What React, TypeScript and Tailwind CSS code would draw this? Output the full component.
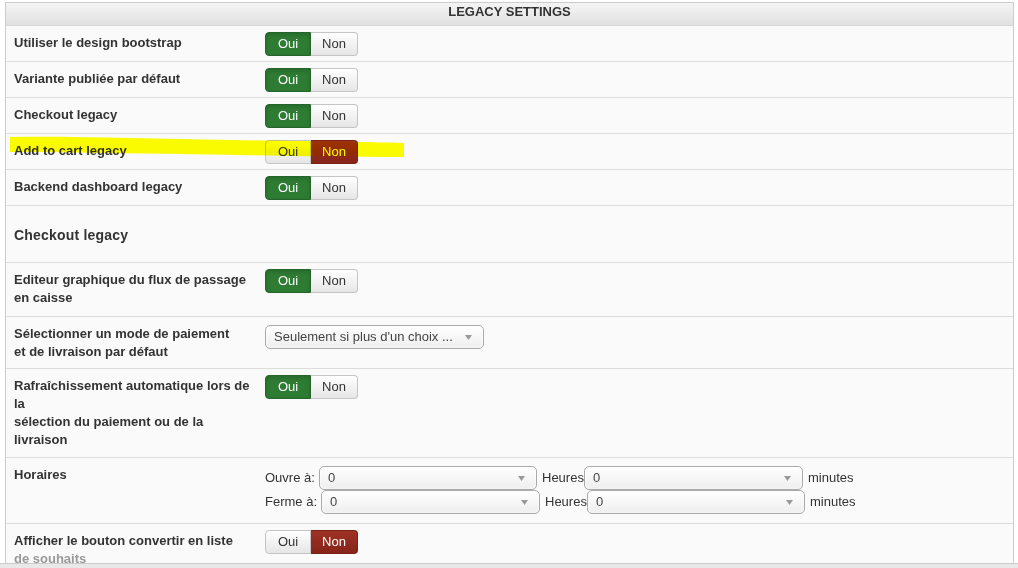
import React from 'react'

function Toggle({ on }: { on: boolean }) {
  return (
    <div className="inline-flex h-[24px] text-[13px] leading-none">
      <span
        className={
          on
            ? 'flex w-[46px] items-center justify-center rounded-l-[4px] border border-[#24652a] bg-[#2e7b33] text-white shadow-[inset_0_2px_4px_rgba(0,0,0,0.15)]'
            : 'flex w-[46px] items-center justify-center rounded-l-[4px] border border-[#c5c5c5] bg-gradient-to-b from-white to-[#e6e6e6] text-[#333]'
        }
      >
        Oui
      </span>
      <span
        className={
          on
            ? 'flex w-[47px] items-center justify-center rounded-r-[4px] border border-l-0 border-[#c5c5c5] bg-gradient-to-b from-white to-[#e6e6e6] text-[#333]'
            : 'flex w-[47px] items-center justify-center rounded-r-[4px] border border-l-0 border-[#7a2015] bg-gradient-to-b from-[#9e3224] to-[#86241a] text-white'
        }
      >
        Non
      </span>
    </div>
  )
}

function Select({ text, w }: { text: string; w: string }) {
  return (
    <div
      className={`flex h-[24px] ${w} items-center justify-between rounded-[5px] border border-[#aaa] bg-gradient-to-b from-white to-[#eeeeee] pl-[8px] pr-[11px] text-[13px] text-[#444] shadow-[inset_0_0_3px_white]`}
    >
      <span className="truncate">{text}</span>
      <svg width="7" height="5" viewBox="0 0 7 5" className="shrink-0">
        <path d="M0 0 L7 0 L3.5 5 Z" fill="#999" />
      </svg>
    </div>
  )
}

function Row({
  label,
  children,
  pt = 'pt-[5px]',
  pb = 'pb-[10px]',
  first = false,
}: {
  label: React.ReactNode
  children?: React.ReactNode
  pt?: string
  pb?: string
  first?: boolean
}) {
  return (
    <div className={first ? 'flex' : 'flex border-t border-[#ddd]'}>
      <div
        className={`w-[259px] shrink-0 ${pb} pl-[8px] pt-[8px] text-[13px] font-bold leading-[18px] text-[#333]`}
      >
        {label}
      </div>
      <div className={`flex-1 ${pt}`}>{children}</div>
    </div>
  )
}

export default function App() {
  return (
    <div className="relative flex h-[568px] w-[1018px] flex-col overflow-hidden bg-white font-['Liberation_Sans',Arial,sans-serif] text-[#333]">
      <div className="ml-[5px] mt-[2px] flex h-[561px] w-[1009px] flex-col overflow-hidden border-x border-t border-[#ccc] bg-[#fafafa]">
        {/* Header */}
        <div className="flex h-[23px] shrink-0 items-start justify-center border-b border-[#d6d6d6] bg-gradient-to-b from-[#f4f4f4] to-[#e1e1e1] pt-[1px] text-[13px] font-bold leading-[16px] text-[#333]">
          LEGACY SETTINGS
        </div>
        <div className="flex flex-col">
          <Row first pb="pb-[9px]" label="Utiliser le design bootstrap">
            <Toggle on />
          </Row>
          <Row pb="pb-[9px]" label="Variante publiée par défaut">
            <Toggle on />
          </Row>
          <Row pb="pb-[9px]" label="Checkout legacy">
            <Toggle on />
          </Row>
          <Row pb="pb-[9px]" label="Add to cart legacy">
            <Toggle on={false} />
          </Row>
          <Row pb="pb-[9px]" label="Backend dashboard legacy">
            <Toggle on />
          </Row>
          <div className="h-[57px] border-t border-[#ddd] pl-[8px] pt-[20px] text-[14px] font-bold leading-[18px] tracking-[0.2px] text-[#333]">
            Checkout legacy
          </div>
          <Row
            pb="pb-[9px]"
            label={
              <>
                Editeur graphique du flux de passage
                <br />
                en caisse
              </>
            }
          >
            <Toggle on />
          </Row>
          <Row
            pt="pt-[8px]"
            pb="pb-[7px]"
            label={
              <>
                Sélectionner un mode de paiement
                <br />
                et de livraison par défaut
              </>
            }
          >
            <Select w="w-[219px]" text="Seulement si plus d'un choix ..." />
          </Row>
          <Row
            pb="pb-[8px]"
            label={
              <>
                Rafraîchissement automatique lors de
                <br />
                la
                <br />
                sélection du paiement ou de la
                <br />
                livraison
              </>
            }
          >
            <Toggle on />
          </Row>
          <Row label="Horaires" pt="pt-[8px]">
            <div className="flex flex-col pb-[9px] text-[13px] text-[#333]">
              <div className="flex items-center">
                <span className="w-[54px]">Ouvre à:</span>
                <Select w="w-[218px]" text="0" />
                <span className="ml-[5px] w-[42px]">Heures</span>
                <Select w="w-[219px]" text="0" />
                <span className="ml-[5px]">minutes</span>
              </div>
              <div className="flex items-center">
                <span className="w-[56px]">Ferme à:</span>
                <Select w="w-[219px]" text="0" />
                <span className="ml-[5px] w-[42px]">Heures</span>
                <Select w="w-[218px]" text="0" />
                <span className="ml-[5px]">minutes</span>
              </div>
            </div>
          </Row>
          <Row
            label={
              <>
                Afficher le bouton convertir en liste
                <br />
                <span className="text-[#999]">de souhaits</span>
              </>
            }
          >
            <Toggle on={false} />
          </Row>
        </div>
      </div>
      <div className="h-[5px] shrink-0 border-t border-[#ccc] bg-[#e8e8e8]" />

      {/* highlighter stroke */}
      <svg
        className="pointer-events-none absolute left-0 top-0 mix-blend-multiply"
        width="1018"
        height="568"
      >
        <path
          d="M10 137 C 80 136, 150 139, 230 140 C 300 141, 360 142, 404 143 L 404 157 C 350 157, 300 156, 240 155 C 160 154, 80 152, 10 152 Z"
          fill="#ffff00"
        />
      </svg>
    </div>
  )
}
